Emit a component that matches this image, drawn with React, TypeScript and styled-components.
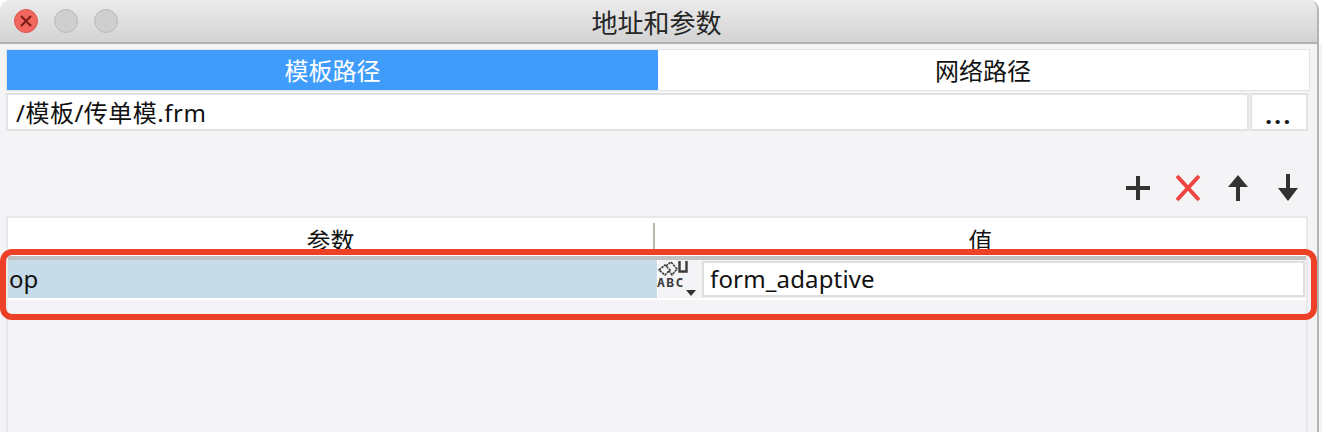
import { createGlobalStyle } from "styled-components";
import styled from "styled-components";

const GlobalStyle = createGlobalStyle`
  html, body {
    margin: 0;
    padding: 0;
    background: #f4f4f6;
  }
  * {
    box-sizing: border-box;
  }
`;

const FONT = `"Noto Sans", "Noto Sans CJK SC", sans-serif`;

const Page = styled.div`
  position: relative;
  width: 1322px;
  height: 432px;
  overflow: hidden;
  background: linear-gradient(#fff 0, #fff 43px, #f4f4f6 43px);
  font-family: ${FONT};
  color: #111;
`;

const Window = styled.div`
  width: 1319px;
  height: 432px;
  display: flex;
  flex-direction: column;
  background: #f4f4f6;
  border-right: 2px solid #b4b4b4;
  border-top-left-radius: 10px;
  border-top-right-radius: 10px;
  overflow: hidden;
`;

const TitleBar = styled.div`
  flex: none;
  height: 44px;
  display: flex;
  align-items: center;
  position: relative;
  padding-left: 14px;
  gap: 16px;
  background: linear-gradient(#ececec, #d3d3d3);
  border-bottom: 2px solid #b3b3b3;
`;

const Light = styled.div<{ $close?: boolean }>`
  width: 24px;
  height: 24px;
  border-radius: 50%;
  display: flex;
  align-items: center;
  justify-content: center;
  background: ${({ $close }) => ($close ? "#f1675e" : "#cfcfcf")};
  border: 1px solid ${({ $close }) => ($close ? "#d8574f" : "#b9b9b9")};
`;

const Title = styled.div`
  position: absolute;
  left: 0;
  right: 4px;
  top: 5px;
  text-align: center;
  font-size: 26px;
  line-height: 36px;
  color: #262626;
`;

const Content = styled.div`
  flex: 1;
  min-height: 0;
  display: flex;
  flex-direction: column;
  padding: 5px 7px 0 6px;
`;

const Tabs = styled.div`
  flex: none;
  height: 42px;
  display: flex;
  background: #fff;
  border: 1px solid #e3e3e5;
`;

const Tab = styled.div<{ $active?: boolean; $width: number }>`
  width: ${({ $width }) => $width}px;
  display: flex;
  align-items: center;
  justify-content: center;
  padding-bottom: 1px;
  font-size: 24px;
  background: ${({ $active }) => ($active ? "#3f9cfb" : "#fff")};
  color: ${({ $active }) => ($active ? "#fff" : "#111")};
`;

const PathRow = styled.div`
  flex: none;
  height: 38px;
  margin-top: 2px;
  margin-right: 2px;
  display: flex;
  gap: 1px;
`;

const PathInput = styled.div`
  flex: 1;
  display: flex;
  align-items: center;
  padding: 0 0 2px 8px;
  font-size: 24px;
  letter-spacing: 0.5px;
  background: #fff;
  border: 2px solid #e3e3e5;
`;

const BrowseButton = styled.div`
  width: 58px;
  display: flex;
  align-items: center;
  justify-content: center;
  padding-top: 4px;
  font-size: 24px;
  font-weight: 700;
  letter-spacing: 2.5px;
  background: #fff;
  border: 2px solid #e3e3e5;
`;

const Toolbar = styled.div`
  flex: none;
  height: 85px;
  margin-right: 2px;
  padding: 42px 5px 0 0;
  display: flex;
  justify-content: flex-end;
  align-items: flex-start;
  gap: 20px;
`;

const ToolIcon = styled.svg`
  width: 30px;
  height: 30px;
  display: block;
`;

const TablePanel = styled.div`
  flex: 1;
  min-height: 0;
  margin-right: 2px;
  display: flex;
  flex-direction: column;
  border: 2px solid #e8e8ea;
  border-bottom: none;
`;

const HeaderRow = styled.div`
  flex: none;
  height: 38px;
  display: flex;
  align-items: flex-start;
  background: #fff;
  font-size: 24px;
`;

const HeaderCell = styled.div<{ $width?: number }>`
  ${({ $width }) => ($width ? `width: ${$width}px;` : "flex: 1;")}
  height: 32px;
  margin-top: 5px;
  display: flex;
  align-items: center;
  justify-content: center;
  &:first-child {
    border-right: 2px solid #b9b6aa;
  }
`;

const Row = styled.div`
  flex: none;
  height: 44px;
  display: flex;
  border-top: 4px solid #c1c1c1;
  border-bottom: 2px solid #fff;
`;

const NameCell = styled.div`
  width: 649px;
  display: flex;
  align-items: center;
  padding: 0 0 2px 1px;
  font-size: 24px;
  background: #c8dbe9;
`;

const TypeCell = styled.div`
  width: 45px;
  flex: none;
  border-left: 1px solid #fff;
`;

const TypeIcon = styled.div`
  position: relative;
  width: 44px;
  height: 38px;
`;

const TypeLabel = styled.span`
  position: absolute;
  left: -1px;
  top: 16px;
  font-family: "DejaVu Sans Mono", monospace;
  font-size: 13px;
  line-height: 13px;
  font-weight: 700;
  letter-spacing: 1.4px;
  color: #3a3a3a;
`;

const TypeArrow = styled.svg`
  position: absolute;
  left: 28px;
  top: 30px;
`;

const ValueInput = styled.div`
  flex: 1;
  margin: 1px 1px 1px 0;
  display: flex;
  align-items: center;
  padding: 0 0 2px 6px;
  font-size: 24px;
  letter-spacing: 0.15px;
  background: #fff;
  border: 2px solid #dedede;
`;

const Annotation = styled.div`
  position: absolute;
  left: 0;
  top: 249px;
  width: 1317px;
  height: 71px;
  border: 6px solid #ee4026;
  border-radius: 12px;
  pointer-events: none;
`;

export default function App() {
  return (
    <Page>
      <GlobalStyle />
      <Window>
        <TitleBar>
          <Light $close>
            <svg width="14" height="14" viewBox="0 0 14 14">
              <path d="M2 2l10 10M12 2L2 12" stroke="#7a1a14" strokeWidth="2" />
            </svg>
          </Light>
          <Light />
          <Light />
          <Title>地址和参数</Title>
        </TitleBar>
        <Content>
          <Tabs>
            <Tab $active $width={651}>
              模板路径
            </Tab>
            <Tab $width={650}>网络路径</Tab>
          </Tabs>
          <PathRow>
            <PathInput>/模板/传单模.frm</PathInput>
            <BrowseButton>...</BrowseButton>
          </PathRow>
          <Toolbar>
            <ToolIcon viewBox="0 0 30 30">
              <path d="M15 3v24M3 15h24" stroke="#333" strokeWidth="4" />
            </ToolIcon>
            <ToolIcon viewBox="0 0 30 30">
              <path d="M4 3l22 24M26 3L4 27" stroke="#ee4540" strokeWidth="4" />
            </ToolIcon>
            <ToolIcon viewBox="0 0 30 30">
              <path d="M15 2l10 12h-8v14h-4V14H5z" fill="#333" />
            </ToolIcon>
            <ToolIcon viewBox="0 0 30 30">
              <path d="M13 1h4v14h8L15 28 5 15h8z" fill="#333" />
            </ToolIcon>
          </Toolbar>
          <TablePanel>
            <HeaderRow>
              <HeaderCell $width={647}>参数</HeaderCell>
              <HeaderCell>值</HeaderCell>
            </HeaderRow>
            <Row>
              <NameCell>op</NameCell>
              <TypeCell>
                <TypeIcon>
                  <svg width="32" height="16" viewBox="0 0 32 16">
                    <path
                      d="M1 9l6-5 5 5-5 5zM8 5l5-4 6 7-5 6-3-4"
                      fill="none"
                      stroke="#3a3a3a"
                      strokeWidth="1.6"
                      strokeDasharray="2.5 0.8"
                    />
                    <path d="M21.5 0v10.5h7V0" fill="none" stroke="#3a3a3a" strokeWidth="2.4" />
                  </svg>
                  <TypeLabel>ABC</TypeLabel>
                  <TypeArrow width="10" height="6" viewBox="0 0 10 6">
                    <path d="M0 0h10L5 6z" fill="#333" />
                  </TypeArrow>
                </TypeIcon>
              </TypeCell>
              <ValueInput>form_adaptive</ValueInput>
            </Row>
          </TablePanel>
        </Content>
      </Window>
      <Annotation />
    </Page>
  );
}
